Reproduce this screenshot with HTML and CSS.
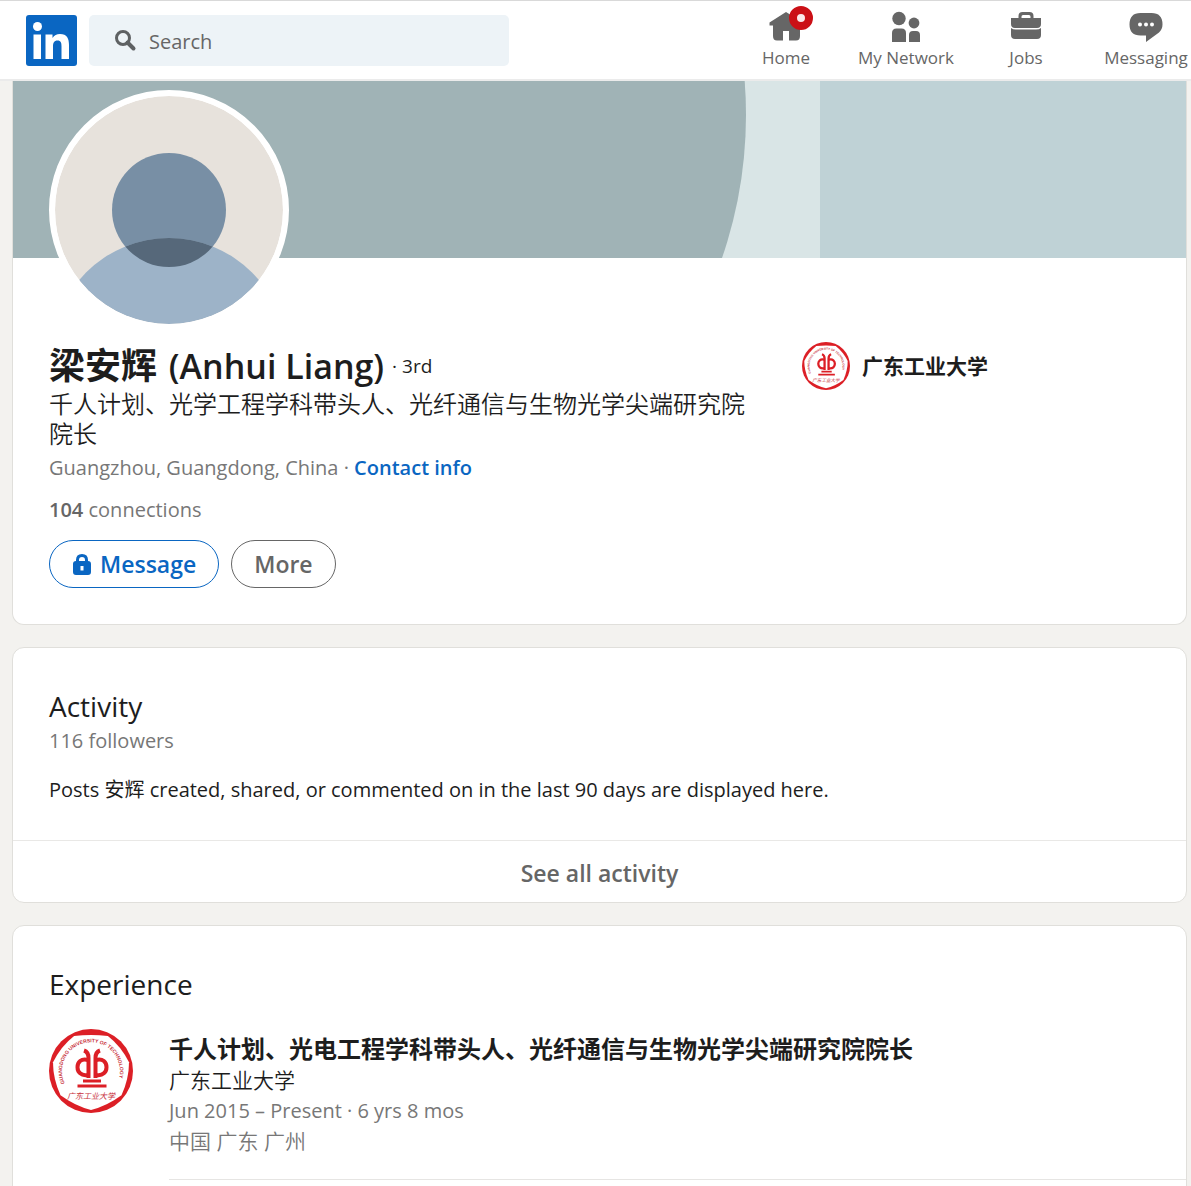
FILE: index.html
```html
<!DOCTYPE html>
<html lang="en">
<head>
<meta charset="utf-8">
<meta name="viewport" content="width=device-width, initial-scale=1">
<title>梁安辉 (Anhui Liang) | LinkedIn</title>
<link rel="stylesheet" href="styles.css">
</head>
<body>
<header class="topbar">
  <a class="logo" href="#" aria-label="LinkedIn">
    <svg viewBox="0 0 51 51" width="51" height="51">
      <rect width="51" height="51" rx="3" fill="#0a66c2"/>
      <circle cx="11.500" cy="11.500" r="4.500" fill="#fff"/>
      <path d="M7.500 19.500H15V44H7.500ZM19.500 19.500H26.500V23Q29 19 34 19C41 19 43 23.500 43 30V44H35.500V31.500C35.500 28 35 25.500 31.500 25.500C28 25.500 27 28 27 31.500V44H19.500Z" fill="#fff"/>
    </svg>
  </a>
  <label class="search">
    <svg viewBox="0 0 24 24" width="24" height="24" fill="none" stroke="#5e6163" aria-hidden="true">
      <circle cx="10" cy="10" r="6.500" stroke-width="3"/>
      <path d="M14.500 14.500L20.500 20.500" stroke-width="4" stroke-linecap="round"/>
    </svg>
    <input class="search-input" type="search" placeholder="Search" aria-label="Search">
  </label>
  <nav class="nav">
    <a class="nav-item" href="#">
      <span class="nav-icon">
        <svg viewBox="0 0 36 36" width="36" height="36" fill="#666"><path d="M18 4L1.500 14.500V17.500H5V28Q5 32.500 9 32.500H15V23H21V32.500H28Q32 32.500 32 28V17.500H35V14.500Z"/></svg>
        <span class="badge"></span>
      </span>
      Home
    </a>
    <a class="nav-item" href="#">
      <span class="nav-icon">
        <svg viewBox="0 0 36 36" width="36" height="36" fill="#666"><circle cx="11" cy="10.500" r="6.700"/><circle cx="26" cy="15" r="5.400"/><path d="M4 34V25Q4 20.500 8.500 20.500H13.500Q18 20.500 18 25V34ZM21 34V27Q21 23 25 23H28Q32 23 32 27V34Z"/></svg>
      </span>
      My Network
    </a>
    <a class="nav-item" href="#">
      <span class="nav-icon">
        <svg viewBox="0 0 36 36" width="36" height="36" fill="#666"><path d="M3 10H10.500V8Q10.500 4 14.500 4H21.500Q25.500 4 25.500 8V10H33V16Q33 20 29 20H7Q3 20 3 16ZM13.500 10H22.500V8.500Q22.500 7 21 7H15Q13.500 7 13.500 8.500ZM3 20Q5 21.500 8 21.500H28Q31 21.500 33 20V27Q33 31 29 31H7Q3 31 3 27Z" fill-rule="evenodd"/></svg>
      </span>
      Jobs
    </a>
    <a class="nav-item" href="#">
      <span class="nav-icon">
        <svg viewBox="0 0 36 36" width="36" height="36" fill="#666"><path d="M12.500 5H23.500Q34.500 5 34.500 16.500Q34.500 21 31 24.500L18 34V27.500H12.500Q1.500 27.500 1.500 16.500Q1.500 5 12.500 5Z"/><g fill="#fff"><circle cx="12" cy="16.500" r="2"/><circle cx="18" cy="16.500" r="2"/><circle cx="24" cy="16.500" r="2"/></g></svg>
      </span>
      Messaging
    </a>
  </nav>
</header>

<main class="page">
  <section class="card profile">
    <svg class="banner" viewBox="0 0 1173 177" preserveAspectRatio="xMidYMid slice" aria-hidden="true">
      <rect width="1173" height="177" fill="#d9e5e6"/>
      <circle cx="295" cy="34" r="438" fill="#a0b3b6"/>
      <rect x="807" width="366" height="177" fill="#bfd2d6"/>
    </svg>
    <div class="profile-body">
      <svg class="avatar" viewBox="0 0 228 228" role="img" aria-label="Profile photo">
        <defs>
          <clipPath id="disc"><circle cx="114" cy="114" r="114"/></clipPath>
          <clipPath id="head"><circle cx="114" cy="114" r="57"/></clipPath>
        </defs>
        <g clip-path="url(#disc)">
          <rect width="228" height="228" fill="#e7e2dc"/>
          <circle cx="114" cy="114" r="57" fill="#788fa5"/>
          <circle cx="114" cy="259" r="117" fill="#9db3c8"/>
          <circle cx="114" cy="259" r="117" fill="#56687a" clip-path="url(#head)"/>
        </g>
      </svg>
      <div class="intro">
        <div class="intro-main">
          <div class="name-row">
            <h1 class="name"><span class="name-zh">梁安辉</span> (Anhui Liang)</h1>
            <span class="degree">· 3rd</span>
          </div>
          <p class="headline">千人计划、光学工程学科带头人、光纤通信与生物光学尖端研究院院长</p>
          <p class="location">Guangzhou, Guangdong, China · <a class="contact" href="#">Contact info</a></p>
          <p class="connections"><strong>104</strong> connections</p>
        </div>
        <a class="company" href="#">
          <svg class="company-logo" viewBox="0 0 84 84" aria-hidden="true">
            <g id="emblem">
              <circle cx="42" cy="42" r="42" fill="#dc1f26"/>
              <path d="M42 81Q26 77 11.500 66.300Q4 50 4 33.300Q12 17 25.100 6.900Q42 5 58.900 6.900Q72 17 80 33.300Q80 50 72.500 66.300Q58 77 42 81Z" fill="#fff"/>
              <path id="emblem-arc" d="M15.700 54.500A29 29 0 1 1 68.300 54.500" fill="none"/>
              <text class="emblem-ring"><textPath href="#emblem-arc">GUANGDONG UNIVERSITY OF TECHNOLOGY</textPath></text>
              <g fill="none" stroke="#dc1f26" stroke-width="4">
                <path d="M35 21.500Q39.500 23 39.500 29V49M51 21.500Q46.500 23 46.500 29V49"/>
                <path d="M39 31C25 27 25 49 39 46M47 31C61 27 61 49 47 46"/>
              </g>
              <path d="M34 50.500H52V53.500H34ZM28.500 55.500H57.500V58.500H28.500Z" fill="#dc1f26"/>
              <text class="emblem-name" x="42" y="70" text-anchor="middle">广东工业大学</text>
            </g>
          </svg>
          广东工业大学
        </a>
      </div>
      <div class="actions">
        <button class="btn btn-message" type="button">
          <svg viewBox="0 0 20 24" width="20" height="24" aria-hidden="true"><path d="M4 9V8Q4 2 10 2Q16 2 16 8V9Q19 9 19 12V20Q19 23 16 23H4Q1 23 1 20V12Q1 9 4 9ZM7 9H13V8Q13 5 10 5Q7 5 7 8ZM8.500 14V18.500H11.500V14Z" fill="#0a66c2" fill-rule="evenodd"/></svg>
          Message
        </button>
        <button class="btn btn-more" type="button">More</button>
      </div>
    </div>
  </section>

  <section class="card">
    <div class="activity-body">
      <h2 class="card-title">Activity</h2>
      <p class="meta">116 followers</p>
      <p class="activity-text">Posts 安辉 created, shared, or commented on in the last 90 days are displayed here.</p>
    </div>
    <a class="see-all" href="#">See all activity</a>
  </section>

  <section class="card experience">
    <h2 class="card-title">Experience</h2>
    <article class="job">
      <svg class="job-logo" viewBox="0 0 84 84" aria-hidden="true"><use href="#emblem"/></svg>
      <div class="job-body">
        <h3 class="job-title">千人计划、光电工程学科带头人、光纤通信与生物光学尖端研究院院长</h3>
        <p class="job-company">广东工业大学</p>
        <p class="meta">Jun 2015 – Present · 6 yrs 8 mos</p>
        <p class="meta job-place">中国 广东 广州</p>
      </div>
    </article>
  </section>
</main>
</body>
</html>
```
FILE: styles.css
```css
* { box-sizing: border-box; }

body {
  margin: 0;
  background: #f3f2ef;
  color: #1d1d1d;
  font: 400 20px/30px "Open Sans", "Noto Sans CJK SC", sans-serif;
}

h1, h2, h3, p { margin: 0; font-weight: 400; }
a { color: inherit; text-decoration: none; }
svg { display: block; flex: none; }

.emblem-ring { font: 700 5px "Liberation Sans", sans-serif; fill: #c8323c; }
.emblem-name { font: italic 400 8px "Noto Sans CJK SC", sans-serif; fill: #c8323c; }

.topbar {
  display: flex;
  align-items: center;
  height: 81px;
  padding-left: 26px;
  overflow: hidden;
  background: #fff;
  border-top: 1px solid #d9d9d9;
  border-bottom: 2px solid #ebebeb;
}

.search {
  display: flex;
  align-items: center;
  gap: 12px;
  width: 420px;
  height: 51px;
  margin-left: 12px;
  padding: 0 24px;
  background: #edf3f7;
  border-radius: 5px;
}

.search-input {
  flex: 1;
  min-width: 0;
  padding: 3px 0 0;
  border: 0;
  outline: 0;
  background: none;
  color: #666;
  font: inherit;
}
.search-input::placeholder { color: #666; opacity: 1; }

.nav { display: flex; margin: 0 -15px 0 auto; }
.nav-item {
  display: flex;
  flex-direction: column;
  align-items: center;
  width: 120px;
  color: #666;
  font-size: 17px;
  line-height: 28px;
  white-space: nowrap;
}
.nav-icon { position: relative; }
.badge {
  position: absolute;
  top: -2px;
  right: -9px;
  width: 24px;
  height: 24px;
  background: #fbe9ea;
  border: 8px solid #cb1016;
  border-radius: 50%;
}

.page {
  display: flex;
  flex-direction: column;
  gap: 22px;
  padding: 0 4px 0 12px;
}

.card {
  background: #fff;
  border: 1px solid #e0dfdb;
  border-radius: 12px;
  overflow: hidden;
}

.profile { border-top: 0; border-radius: 0 0 12px 12px; }
.banner { width: 100%; height: 177px; }
.profile-body { padding: 0 36px 36px; }
.avatar {
  position: relative;
  width: 240px;
  height: 240px;
  margin-top: -168px;
  border: 6px solid #fff;
  border-radius: 50%;
  background: #fff;
}

.intro { display: flex; gap: 36px; padding-top: 12px; }
.intro-main { flex: 0 1 717px; }
.name-row { display: flex; align-items: flex-end; gap: 8px; min-height: 47px; }
.name { font-size: 34px; font-weight: 600; line-height: 46px; }
.name-zh { margin-right: 3px; font-size: 36px; font-weight: 700; }
.degree { font-size: 19px; line-height: 46px; }
.headline { font-size: 24px; font-weight: 350; }
.location { margin-top: 4px; color: #777; }
.contact { color: #0a66c2; font-weight: 600; }
.connections { margin-top: 12px; color: #777; }
.connections strong { color: #666; font-weight: 600; }

.company {
  display: flex;
  align-items: center;
  align-self: flex-start;
  gap: 12px;
  font-size: 21px;
  font-weight: 700;
}
.company-logo { width: 48px; height: 48px; }

.actions { display: flex; gap: 12px; margin-top: 15px; }
.btn {
  display: flex;
  align-items: center;
  justify-content: center;
  gap: 8px;
  height: 48px;
  padding: 0 22px;
  background: #fff;
  border: 1px solid;
  border-radius: 24px;
  font: inherit;
  font-size: 23px;
  font-weight: 600;
}
.btn-message { color: #0a66c2; }
.btn-more { color: #666; }

.activity-body { padding: 38px 36px 35px; }
.card-title { font-size: 28px; line-height: 40px; }
.meta { color: #777; }
.activity-text { margin-top: 19px; }
.see-all {
  display: block;
  padding: 17px 15px 14px;
  border-top: 1px solid #e9e8e6;
  color: #666;
  font-size: 23px;
  font-weight: 600;
  text-align: center;
}

.experience { padding: 38px 0 36px 36px; border-radius: 12px 12px 0 0; }
.job { display: flex; gap: 36px; margin-top: 25px; }
.job-logo { width: 84px; height: 84px; }
.job-body { flex: 1; padding: 5px 0 23px; border-bottom: 1px solid #e6e5e3; }
.job-title { font-size: 24px; font-weight: 700; }
.job-company, .job-place { font-size: 21px; font-weight: 350; }
.job-company { line-height: 32px; }
```
